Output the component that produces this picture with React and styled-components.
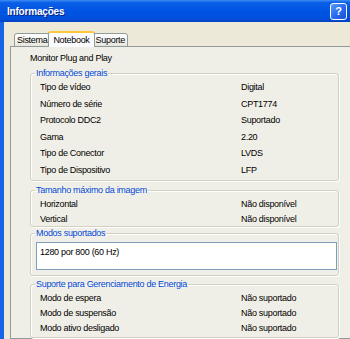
import styled, { createGlobalStyle } from "styled-components";

const GlobalStyle = createGlobalStyle`
  html, body {
    margin: 0;
    padding: 0;
    background: #ece9d8;
  }
  body {
    font-family: "Liberation Sans", Arial, sans-serif;
    font-size: 9px;
    letter-spacing: -0.3px;
    color: #000;
  }
`;

const Window = styled.div`
  width: 350px;
  height: 339px;
  overflow: hidden;
  display: flex;
  flex-direction: column;
  background: #ece9d8;
`;

const TitleBar = styled.div`
  height: 22px;
  flex: none;
  display: flex;
  align-items: center;
  justify-content: space-between;
  padding: 0 3px 0 7px;
  background: linear-gradient(
    to bottom,
    #3d8cf5 0%,
    #0a5fe6 12%,
    #0054e3 50%,
    #0050dc 85%,
    #0042c0 100%
  );
`;

const Title = styled.span`
  color: #fff;
  font-weight: bold;
  font-size: 10px;
  letter-spacing: -0.2px;
  text-shadow: 1px 1px 0 #0a1f80;
`;

const HelpButton = styled.div`
  width: 15px;
  height: 15px;
  border: 1px solid #fff;
  border-radius: 3px;
  background: linear-gradient(135deg, #5b9bff 0%, #2a6cf0 50%, #1a50d0 100%);
  color: #fff;
  font-weight: bold;
  font-size: 11px;
  display: flex;
  align-items: center;
  justify-content: center;
  letter-spacing: 0;
`;

const Body = styled.div`
  flex: 1;
  display: flex;
  flex-direction: column;
  border-left: 4px solid #1663e6;
  padding: 9px 0 0 6px;
`;

const TabStrip = styled.div`
  display: flex;
  align-items: flex-end;
  height: 16px;
  padding-left: 4px;
  position: relative;
  z-index: 1;
  margin-bottom: -1px;
`;

const Tab = styled.div`
  height: ${(p) => (p.$active ? "16px" : "14px")};
  box-sizing: border-box;
  padding: 0 ${(p) => (p.$active ? "4px" : "2px")};
  margin: 0 ${(p) => (p.$active ? "-2px" : "0")};
  display: flex;
  align-items: center;
  border: 1px solid #919b9c;
  border-bottom: ${(p) => (p.$active ? "none" : "1px solid #919b9c")};
  border-top: ${(p) => (p.$active ? "2px solid #ffc83c" : "1px solid #919b9c")};
  border-radius: 3px 3px 0 0;
  background: ${(p) =>
    p.$active
      ? "#fcfcfe"
      : "linear-gradient(to bottom, #ffffff 0%, #f3f3ef 60%, #e6e5dc 100%)"};
  position: relative;
  z-index: ${(p) => (p.$active ? 2 : 1)};
`;

const Panel = styled.div`
  flex: 1;
  width: 360px;
  border: 1px solid #919b9c;
  background: #f0efe7;
  padding: 5px 0 0 19px;
`;

const Heading = styled.div`
  line-height: 12px;
`;

const Group = styled.fieldset`
  width: 309px;
  box-sizing: border-box;
  margin: ${(p) => p.$mt ?? 4}px 0 0 0;
  padding: 0 0 ${(p) => p.$pb ?? 2}px 4px;
  border: 1px solid #d3d0bf;
  border-radius: 3px;
  box-shadow: inset 1px 1px 0 #fff, 1px 1px 0 #fff;
  min-width: 0;
`;

const Legend = styled.legend`
  color: #0046d5;
  padding: 0 1px;
  line-height: 11px;
`;

const Row = styled.div`
  display: grid;
  grid-template-columns: 201px 1fr;
  height: ${(p) => p.$h}px;
  align-items: center;
  padding-left: 5px;
`;

const ListBox = styled.div`
  width: 301px;
  height: 28px;
  box-sizing: border-box;
  margin: 3px 0 0 1px;
  background: #fff;
  border: 1px solid #7f9db9;
  padding: 3px 0 0 3px;
  line-height: 12px;
`;

const general = [
  ["Tipo de vídeo", "Digital"],
  ["Número de série", "CPT1774"],
  ["Protocolo DDC2", "Suportado"],
  ["Gama", "2.20"],
  ["Tipo de Conector", "LVDS"],
  ["Tipo de Dispositivo", "LFP"],
];

const size = [
  ["Horizontal", "Não disponível"],
  ["Vertical", "Não disponível"],
];

const power = [
  ["Modo de espera", "Não suportado"],
  ["Modo de suspensão", "Não suportado"],
  ["Modo ativo desligado", "Não suportado"],
];

function Rows({ items, h }) {
  return items.map(([k, v]) => (
    <Row key={k} $h={h}>
      <span>{k}</span>
      <span>{v}</span>
    </Row>
  ));
}

export default function App() {
  return (
    <>
      <GlobalStyle />
      <Window>
        <TitleBar>
          <Title>Informações</Title>
          <HelpButton>?</HelpButton>
        </TitleBar>
        <Body>
          <TabStrip>
            <Tab>Sistema</Tab>
            <Tab $active>Notebook</Tab>
            <Tab>Suporte</Tab>
          </TabStrip>
          <Panel>
            <Heading>Monitor Plug and Play</Heading>
            <Group $mt={4}>
              <Legend>Informações gerais</Legend>
              <Rows items={general} h={16.5} />
            </Group>
            <Group $mt={4} $pb={0}>
              <Legend>Tamanho máximo da imagem</Legend>
              <Rows items={size} h={15} />
            </Group>
            <Group $mt={1} $pb={5}>
              <Legend>Modos suportados</Legend>
              <ListBox>1280 por 800 (60 Hz)</ListBox>
            </Group>
            <Group $mt={3}>
              <Legend>Suporte para Gerenciamento de Energia</Legend>
              <Rows items={power} h={15} />
            </Group>
          </Panel>
        </Body>
      </Window>
    </>
  );
}
